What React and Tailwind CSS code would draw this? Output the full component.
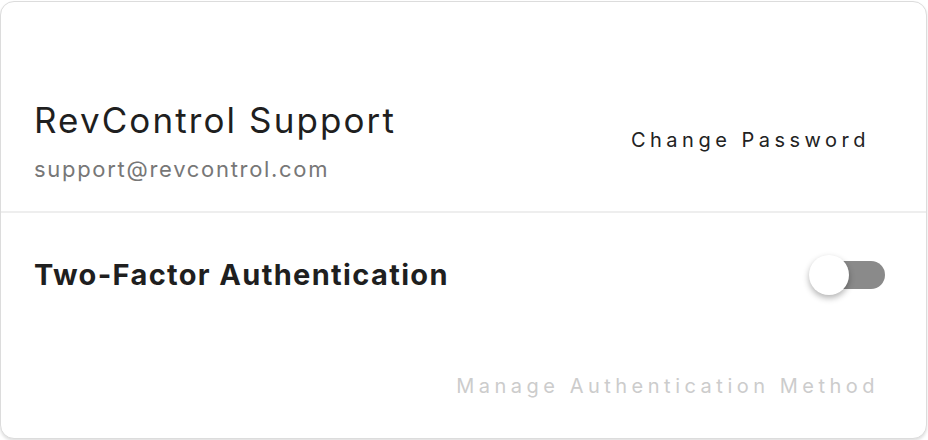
export default function App() {
  return (
    <div className="w-[928px] h-[440px] bg-white" style={{ fontFamily: 'Inter, "Liberation Sans", sans-serif' }}>
      <div className="mt-px w-[927px] h-[438px] rounded-[14px] border border-[#dcdcdc] bg-white shadow-[0_2px_3px_rgba(0,0,0,0.12)] flex flex-col overflow-hidden">
        {/* account header */}
        <div className="h-[211px] flex items-start justify-between pl-[33px] pr-[56px] pt-[97px] border-b-2 border-[#eeeeee]">
          <div className="flex flex-col">
            <h1 className="text-[35px] leading-[42px] text-[#1f1f1f] tracking-[2.1px]">RevControl Support</h1>
            <p className="mt-[15px] text-[22px] leading-[26px] text-[#777777] tracking-[1.7px]">support@revcontrol.com</p>
          </div>
          <button className="mt-[29px] text-[20px] leading-[24px] text-[#222222] tracking-[4.5px]">Change Password</button>
        </div>

        {/* 2FA */}
        <div className="flex-1 flex flex-col pl-[33px] pr-[41px]">
          <div className="flex items-center justify-between mt-[45px]">
            <span className="text-[29px] leading-[34px] font-bold text-[#1f1f1f] tracking-[1.35px]">Two-Factor Authentication</span>
            <div className="relative w-[68px] h-[28px]">
              <div className="absolute inset-0 rounded-full bg-[#8a8a8a]" />
              <div className="absolute left-[-8px] top-[-6px] w-[40px] h-[40px] rounded-full bg-white shadow-[0_3px_6px_rgba(0,0,0,0.3)]" />
            </div>
          </div>
          <div className="flex justify-end pr-[6px] mt-[82px]">
            <button className="text-[20px] leading-[24px] text-[#cccccc] tracking-[4.5px]">Manage Authentication Method</button>
          </div>
        </div>
      </div>
    </div>
  );
}
